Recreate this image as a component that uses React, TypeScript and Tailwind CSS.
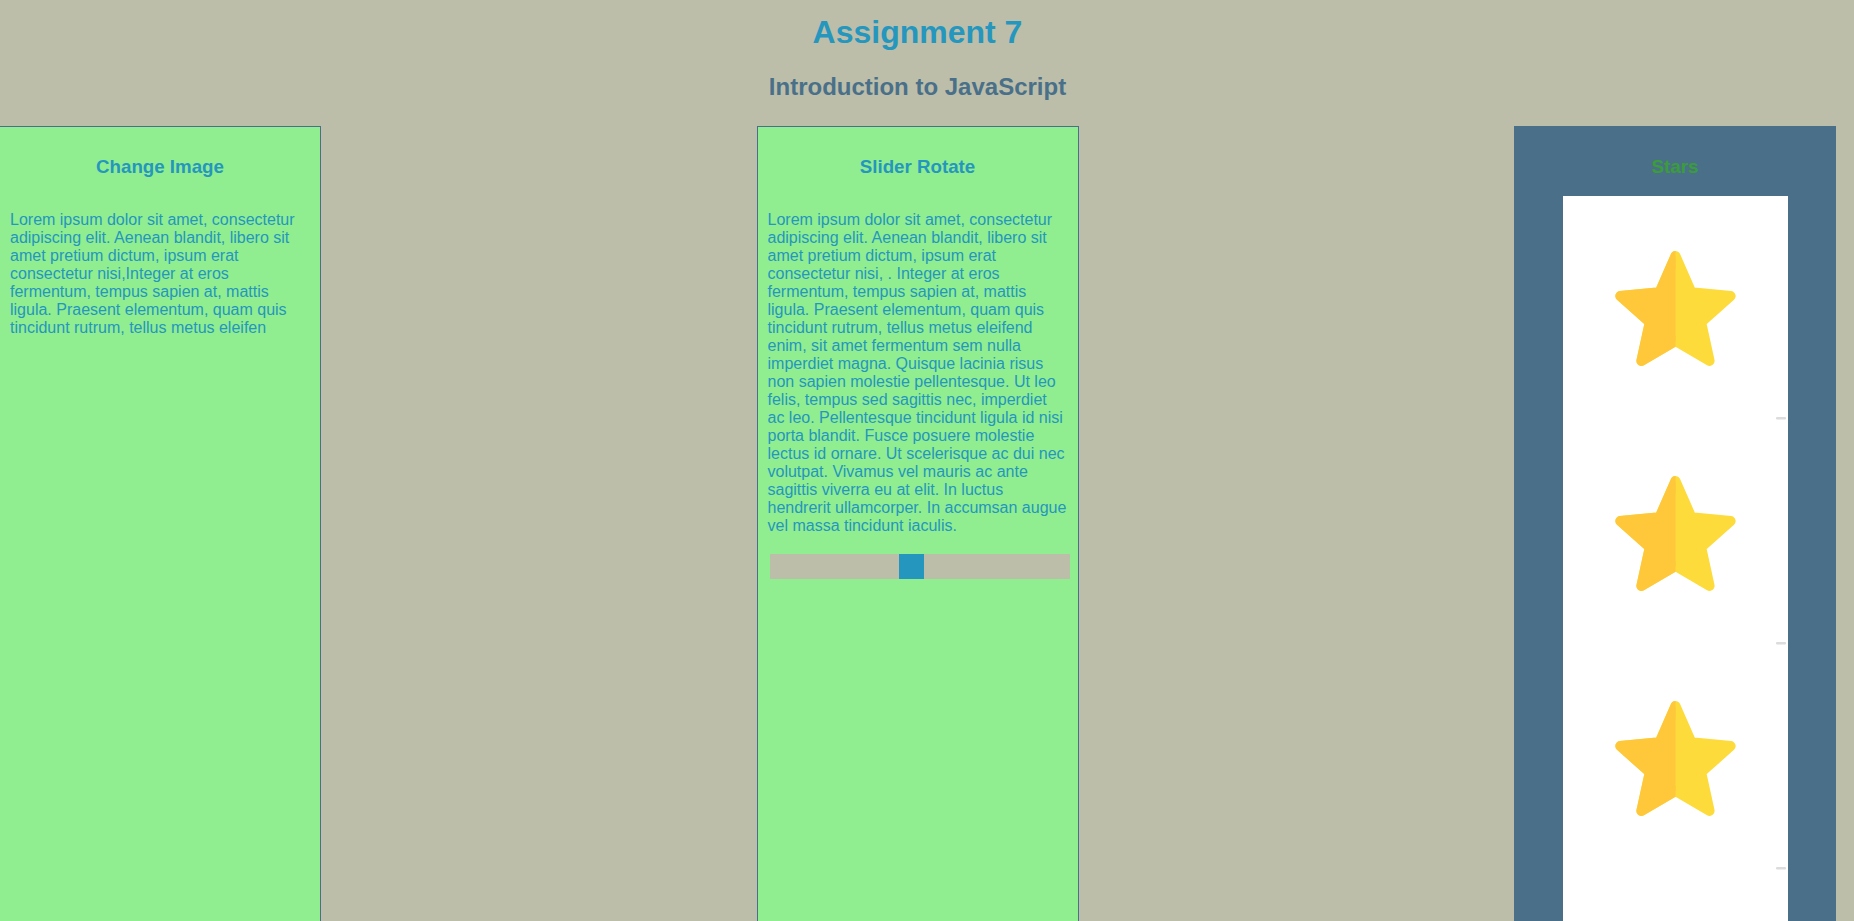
import React from "react";

const intro =
	"Lorem ipsum dolor sit amet, consectetur adipiscing elit. Aenean blandit, libero sit amet pretium dictum, ipsum erat consectetur nisi,Integer at eros fermentum, tempus sapien at, mattis ligula. Praesent elementum, quam quis tincidunt rutrum, tellus metus eleifen";

const rotateText =
	"Lorem ipsum dolor sit amet, consectetur adipiscing elit. Aenean blandit, libero sit amet pretium dictum, ipsum erat consectetur nisi, . Integer at eros fermentum, tempus sapien at, mattis ligula. Praesent elementum, quam quis tincidunt rutrum, tellus metus eleifend enim, sit amet fermentum sem nulla imperdiet magna. Quisque lacinia risus non sapien molestie pellentesque. Ut leo felis, tempus sed sagittis nec, imperdiet ac leo. Pellentesque tincidunt ligula id nisi porta blandit. Fusce posuere molestie lectus id ornare. Ut scelerisque ac dui nec volutpat. Vivamus vel mauris ac ante sagittis viverra eu at elit. In luctus hendrerit ullamcorper. In accumsan augue vel massa tincidunt iaculis.";

// star points, centre (112.5, 118), tips inset for the round stroke
function starPoints() {
	const pts: string[] = [];
	for (let i = 0; i < 10; i++) {
		const a = ((-90 + i * 36) * Math.PI) / 180;
		const r = i % 2 === 0 ? 58 : 27;
		pts.push(`${(112.5 + r * Math.cos(a)).toFixed(2)},${(118 + r * Math.sin(a)).toFixed(2)}`);
	}
	return pts.join(" ");
}

const points = starPoints();

function Star({ id }: { id: number }) {
	return (
		<svg width="225" height="225" viewBox="0 0 225 225" className="block">
			<defs>
				<clipPath id={`half-${id}`}>
					<rect x="0" y="0" width="112.5" height="225" />
				</clipPath>
			</defs>
			<polygon points={points} fill="#fddb3a" stroke="#fddb3a" strokeWidth="10" strokeLinejoin="round" />
			<polygon
				points={points}
				fill="#fec83a"
				stroke="#fec83a"
				strokeWidth="10"
				strokeLinejoin="round"
				clipPath={`url(#half-${id})`}
			/>
			<rect x="213" y="221" width="10" height="2.5" rx="1" fill="#dcdcdc" />
		</svg>
	);
}

export default function App() {
	return (
		<div className="min-h-screen overflow-hidden bg-[#bcbea9] font-['Liberation_Sans',Arial,sans-serif]">
			<div className="-ml-px w-[1837px]">
				<header className="pt-[14px] text-center font-bold">
					<h1 className="text-[32px] leading-[37px] text-[#2596be]">Assignment 7</h1>
					<h2 className="mt-[22px] text-[24px] leading-[28px] text-[#4a7089]">Introduction to JavaScript</h2>
				</header>

				<div className="mt-[25px] flex justify-between">
					<section className="h-[820px] w-[322px] border border-[#4a7089] bg-[#90ee90] px-[10px] pt-[28.5px]">
						<h3 className="text-center text-[18.72px] font-bold leading-[21.5px] text-[#2596be]">Change Image</h3>
						<p className="mt-[34px] text-[16px] leading-[18px] text-[#2596be]">{intro}</p>
					</section>

					<section className="h-[820px] w-[322px] border border-[#4a7089] bg-[#90ee90] px-[10px] pt-[28.5px]">
						<h3 className="text-center text-[18.72px] font-bold leading-[21.5px] text-[#2596be]">Slider Rotate</h3>
						<p className="mt-[34px] text-[16px] leading-[18px] text-[#2596be]">{rotateText}</p>
						<div className="ml-[2px] mt-[19px] flex h-[25px] w-[300px] bg-[#bcbea9]">
							<div className="ml-[129px] h-[25px] w-[25px] bg-[#2596be]" />
						</div>
					</section>

					<section className="w-[322px] border border-[#4a7089] bg-[#4a7089] pt-[28.5px]">
						<h3 className="text-center text-[18.72px] font-bold leading-[21.5px] text-[#3a9d3a]">Stars</h3>
						<div className="mx-auto mt-[19px] w-[225px] bg-white">
							{[0, 1, 2, 3].map((i) => (
								<Star key={i} id={i} />
							))}
						</div>
					</section>
				</div>
			</div>
		</div>
	);
}
